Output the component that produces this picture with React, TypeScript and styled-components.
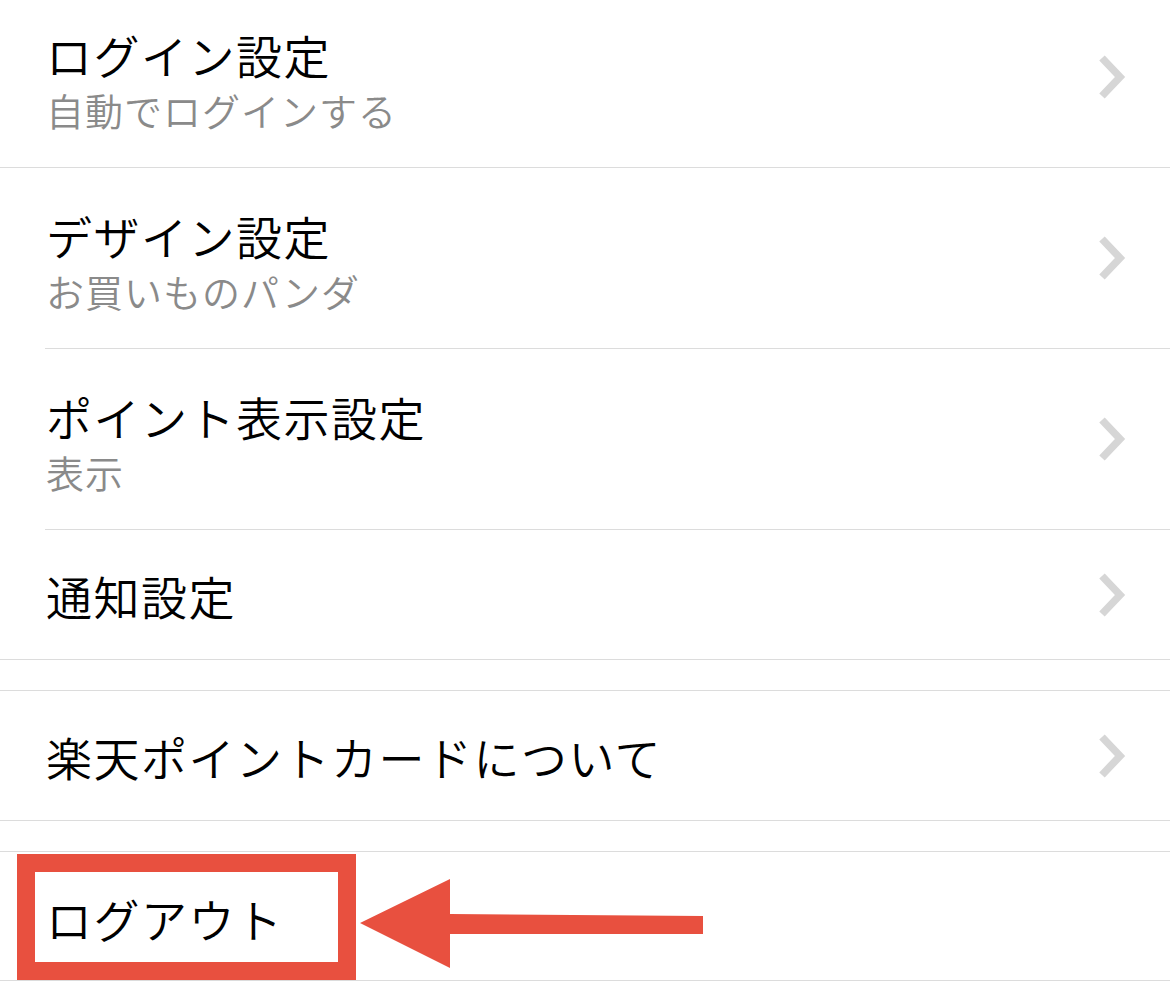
import React from 'react'
import styled, { createGlobalStyle } from 'styled-components'

const GlobalStyle = createGlobalStyle`
  html, body {
    margin: 0;
    padding: 0;
    background: #ffffff;
  }
  body {
    font-family: "Noto Sans CJK JP", "Noto Sans", sans-serif;
    overflow: hidden;
  }
`

const Screen = styled.div`
  width: 1170px;
  height: 1004px;
  overflow: hidden;
  background: #ffffff;
`

const List = styled.div`
  display: flex;
  flex-direction: column;
  margin-top: -13px;
`

const Row = styled.div<{ $inset: boolean }>`
  position: relative;
  display: flex;
  padding-left: ${(p) => (p.$inset ? '45px' : '0')};
`

const Inner = styled.div<{ $inset: boolean; $height: number }>`
  flex: 1;
  display: flex;
  align-items: center;
  height: ${(p) => p.$height}px;
  padding-left: ${(p) => (p.$inset ? '1px' : '46px')};
  padding-right: 43px;
  border-bottom: 1px solid #dcdcdc;
`

const Texts = styled.div<{ $shift: number }>`
  flex: 1;
  display: flex;
  flex-direction: column;
  gap: 4px;
  margin-top: ${(p) => p.$shift}px;
`

const Title = styled.div`
  font-size: 46px;
  font-weight: 350;
  line-height: 54px;
  color: #000000;
  letter-spacing: 1.5px;
`

const Sub = styled.div`
  font-size: 38px;
  font-weight: 350;
  line-height: 50px;
  color: #8a8a8a;
  letter-spacing: 1px;
`

const Gap = styled.div`
  height: 30px;
  border-bottom: 1px solid #dcdcdc;
`

const Chevron = styled.svg`
  flex: none;
  width: 30px;
  height: 46px;
`

const Highlight = styled.div`
  position: absolute;
  left: 17px;
  top: 2px;
  width: 339px;
  height: 126px;
  box-sizing: border-box;
  border: 18px solid #e8503f;
  pointer-events: none;
`

const Arrow = styled.svg`
  position: absolute;
  left: 358px;
  top: 25px;
  width: 350px;
  height: 94px;
  pointer-events: none;
`

interface ItemProps {
  title: string;
  sub?: string;
  inset?: boolean;
  height: number;
  chevron?: boolean;
  shift?: number;
  children?: React.ReactNode;
}

const Item = ({ title, sub, inset = false, height, chevron = true, shift = 0, children }: ItemProps) => (
  <Row $inset={inset}>
    <Inner $inset={inset} $height={height}>
      <Texts $shift={shift}>
        <Title>{title}</Title>
        {sub && <Sub>{sub}</Sub>}
      </Texts>
      {chevron && (
        <Chevron viewBox="0 0 30 46">
          <polyline
            points="5,4 23,23 5,42"
            fill="none"
            stroke="#d6d6d6"
            strokeWidth="7.5"
          />
        </Chevron>
      )}
    </Inner>
    {children}
  </Row>
)

const App = () => (
  <Screen>
    <GlobalStyle />
    <List>
      <Item title="ログイン設定" sub="自動でログインする" height={180} shift={8} />
      <Item title="デザイン設定" sub="お買いものパンダ" inset height={180} shift={8} />
      <Item title="ポイント表示設定" sub="表示" inset height={180} shift={8} />
      <Item title="通知設定" height={129} />
      <Gap />
      <Item title="楽天ポイントカードについて" height={129} />
      <Gap />
      <Item title="ログアウト" height={128} chevron={false} shift={4}>
        <Highlight />
        <Arrow viewBox="0 0 350 94">
          <polygon points="2,46 92,2 92,37 345,39 345,57 92,57 92,91" fill="#e8503f" />
        </Arrow>
      </Item>
    </List>
  </Screen>
)

export default App
